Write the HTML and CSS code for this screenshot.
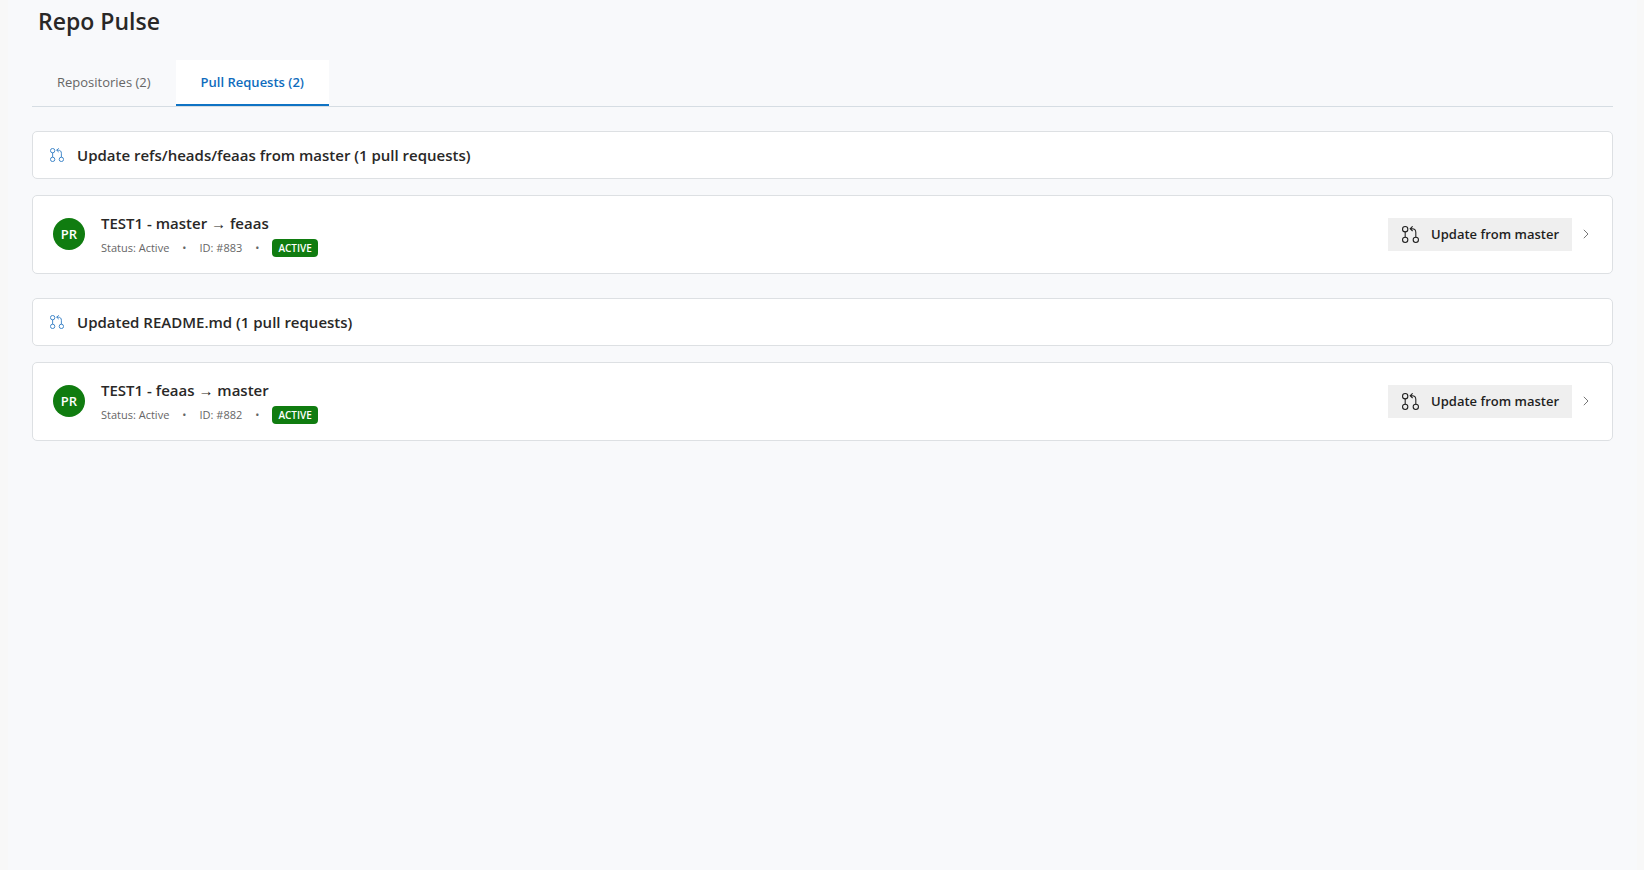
FILE: index.html
```html
<!DOCTYPE html>
<html lang="en">
<head>
    <meta charset="UTF-8">
    <meta name="viewport" content="width=device-width, initial-scale=1.0">

    <title>Repo Pulse</title>
    <link rel="stylesheet" href="styles.css">
</head>
<body>

    <!-- shared icons -->
    <svg class="icon-defs" aria-hidden="true">
        <symbol id="icon-pull" viewBox="0 0 16 16">
            <g fill="none" stroke="currentColor" stroke-width="1">
                <circle cx="3" cy="3" r="2.5"/>
                <circle cx="3" cy="13" r="2.5"/>
                <circle cx="13" cy="13" r="2.5"/>
                <path d="M3 5.500v5M13 10.500V6C13 3.800 11.800 2.500 9.500 2.500H7.500M10 .3L7.700 2.500L10 4.700"/>
            </g>
        </symbol>
        <symbol id="icon-chevron" viewBox="0 0 6 10">
            <path d="M.8 .8L5 5L.8 9.200" fill="none" stroke="currentColor"/>
        </symbol>
    </svg>

    <div class="container">
        <h1>Repo Pulse</h1>

        <div class="tabs" role="tablist">
            <button type="button" class="tab" role="tab" aria-selected="false">Repositories (2)</button>
            <button type="button" class="tab active" role="tab" aria-selected="true">Pull Requests (2)</button>
        </div>

        <main>
            <section class="group">
                <h2 class="group-header">
                    <svg class="group-icon" aria-hidden="true"><use href="#icon-pull"/></svg>
                    Update refs/heads/feaas from master (1 pull requests)
                </h2>
                <div class="card">
                    <div class="avatar">PR</div>
                    <div class="info">
                        <h3>TEST1 - master <span class="arrow">→</span> feaas</h3>
                        <div class="meta">
                            <span>Status: Active</span>
                            <span>•</span>
                            <span>ID: #883</span>
                            <span>•</span>
                            <span class="badge">ACTIVE</span>
                        </div>
                    </div>
                    <button type="button" class="update-btn">
                        <svg class="btn-icon" aria-hidden="true"><use href="#icon-pull"/></svg>
                        Update from master
                    </button>
                    <svg class="chevron" aria-hidden="true"><use href="#icon-chevron"/></svg>
                </div>
            </section>

            <section class="group">
                <h2 class="group-header">
                    <svg class="group-icon" aria-hidden="true"><use href="#icon-pull"/></svg>
                    Updated README.md (1 pull requests)
                </h2>
                <div class="card">
                    <div class="avatar">PR</div>
                    <div class="info">
                        <h3>TEST1 - feaas <span class="arrow">→</span> master</h3>
                        <div class="meta">
                            <span>Status: Active</span>
                            <span>•</span>
                            <span>ID: #882</span>
                            <span>•</span>
                            <span class="badge">ACTIVE</span>
                        </div>
                    </div>
                    <button type="button" class="update-btn">
                        <svg class="btn-icon" aria-hidden="true"><use href="#icon-pull"/></svg>
                        Update from master
                    </button>
                    <svg class="chevron" aria-hidden="true"><use href="#icon-chevron"/></svg>
                </div>
            </section>
        </main>
    </div>

</body>
</html>
```

FILE: styles.css
```css
* {
    box-sizing: border-box;
}

body {
    margin: 0;
    padding: 0 7px 0 8px;
    background-color: #f8f8f8;
    color: #292827;
    font-family: 'Segoe UI', 'Open Sans', 'Noto Sans', sans-serif;
}

h1, h2, h3 {
    margin: 0;
    font-weight: 600;
}

.icon-defs {
    display: none;
}

.container {
    min-height: 100vh;
    padding: 6px 24px 24px;
    background-color: #f8f9fb;
}

h1 {
    padding-left: 6px;
    font-size: 23px;
    line-height: 30px;
}

/* Tabs */
.tabs {
    display: flex;
    margin-top: 24px;
    border-bottom: 1px solid #d6dde3;
}

.tab {
    height: 46px;
    padding: 0 25px;
    border: none;
    border-bottom: 2px solid transparent;
    background: transparent;
    color: #666;
    font-family: inherit;
    font-size: 13px;
    cursor: pointer;
}

.tab.active {
    border-bottom-color: #0f73c4;
    background-color: white;
    color: #0f6cbd;
    font-weight: 600;
}

/* Pull request groups */
.group {
    margin-top: 24px;
}

.group-header {
    display: flex;
    align-items: center;
    gap: 13px;
    height: 48px;
    padding: 0 17px;
    border: 1px solid #dde0e3;
    border-radius: 5px;
    background-color: white;
    font-size: 15px;
}

.group-icon {
    width: 14px;
    height: 14px;
    color: #2b79c2;
}

.card {
    display: flex;
    align-items: center;
    margin-top: 16px;
    padding: 15px 20px 16px;
    border: 1px solid #dde0e3;
    border-radius: 5px;
    background-color: white;
}

.avatar {
    width: 32px;
    height: 32px;
    border-radius: 50%;
    background-color: #107c10;
    color: white;
    font-size: 13px;
    font-weight: 600;
    line-height: 32px;
    text-align: center;
}

.info {
    flex: 1;
    margin-left: 16px;
}

.info h3 {
    font-size: 15px;
    line-height: 24px;
}

.arrow {
    font-family: 'Liberation Sans', sans-serif;
    font-weight: 400;
}

.meta {
    display: flex;
    align-items: center;
    gap: 13px;
    margin-top: 3px;
    color: #666;
    font-size: 11px;
    line-height: 18px;
}

.badge {
    padding: 0 6px;
    border-radius: 4px;
    background-color: #107c10;
    color: white;
    font-size: 10px;
    font-weight: 600;
}

.update-btn {
    display: flex;
    align-items: center;
    gap: 12px;
    height: 33px;
    padding: 0 13px 0 14px;
    border: none;
    background-color: #efefef;
    color: #1f1f1f;
    font-family: inherit;
    font-size: 13px;
    font-weight: 600;
    cursor: pointer;
}

.update-btn:hover {
    background-color: #e4e4e4;
}

.btn-icon {
    width: 17px;
    height: 17px;
}

.chevron {
    width: 6px;
    height: 10px;
    margin: 0 3px 0 11px;
    color: #777;
}
```
